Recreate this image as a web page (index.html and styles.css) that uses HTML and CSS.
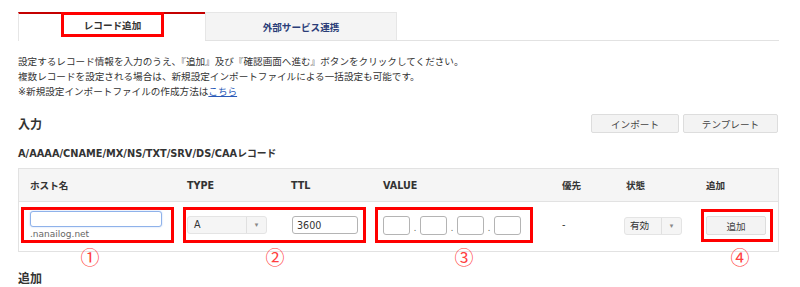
FILE: index.html
```html
<!DOCTYPE html>
<html>
  <head>
    <title>DNSレコード設定</title>
    <link rel="stylesheet" href="styles.css">
  </head>
  <body>
    <div class="page">
      <div class="tabs">
        <div class="tab tab-active"><span class="mark mark-tab">レコード追加</span></div>
        <div class="tab tab-other">外部サービス連携</div>
      </div>

      <p class="intro">
        設定するレコード情報を入力のうえ、『追加』及び『確認画面へ進む』ボタンをクリックしてください。<br>
        複数レコードを設定される場合は、新規設定インポートファイルによる一括設定も可能です。<br>
        ※新規設定インポートファイルの作成方法は<a href="#">こちら</a>
      </p>

      <div class="section-head">
        <h3>入力</h3>
        <div class="tools">
          <button class="btn btn-import">インポート</button>
          <button class="btn btn-template">テンプレート</button>
        </div>
      </div>

      <h4 class="record-title">A/AAAA/CNAME/MX/NS/TXT/SRV/DS/CAAレコード</h4>

      <div class="record-table">
        <div class="thead">
          <div class="th col-host">ホスト名</div>
          <div class="th col-type">TYPE</div>
          <div class="th col-ttl">TTL</div>
          <div class="th col-value">VALUE</div>
          <div class="th col-prio">優先</div>
          <div class="th col-state">状態</div>
          <div class="th col-add">追加</div>
        </div>
        <div class="trow">
          <div class="mark mark-host">
            <input type="text" class="host-input">
            <span class="domain">.nanailog.net</span>
          </div>
          <div class="mark mark-type">
            <div class="select select-type"><span class="select-val">A</span><span class="select-arrow">▾</span></div>
            <input type="text" class="ttl-input" value="3600">
          </div>
          <div class="mark mark-value">
            <input type="text" class="ip-input">
            <span class="dot">.</span>
            <input type="text" class="ip-input">
            <span class="dot">.</span>
            <input type="text" class="ip-input">
            <span class="dot">.</span>
            <input type="text" class="ip-input">
          </div>
          <div class="prio">-</div>
          <div class="select select-state"><span class="select-val">有効</span><span class="select-arrow">▾</span></div>
          <div class="mark mark-add">
            <button class="btn btn-add">追加</button>
          </div>
        </div>
      </div>

      <div class="notes">
        <span class="num num-1">①</span>
        <span class="num num-2">②</span>
        <span class="num num-3">③</span>
        <span class="num num-4">④</span>
      </div>

      <h3 class="add-title">追加</h3>
    </div>
  </body>
</html>
```

FILE: styles.css
```css
/* DNS record form */
body {
  margin: 0;
  font-family: "DejaVu Sans", "Noto Sans CJK JP", sans-serif;
  font-size: 9.6px;
  color: #333333;
  background-color: #ffffff;
}

.page {
  width: 761px;
  padding: 12px 18px 0 18px;
}

/* tabs */
.tabs {
  display: flex;
  border-bottom: 1px solid #e2e2e2;
  height: 28px;
}

.tab {
  box-sizing: border-box;
  height: 28px;
  font-weight: bold;
}

.tab-active {
  width: 187px;
  height: 29px;
  margin-bottom: -1px;
  border-top: 2px solid #c40000;
  border-left: 1px solid #e6e6e6;
  background-color: #ffffff;
  display: flex;
  justify-content: center;
  align-items: flex-start;
}

.tab-other {
  width: 192px;
  border: 1px solid #e6e6e6;
  border-bottom: none;
  background-color: #f4f4f4;
  color: #2a3d78;
  display: flex;
  justify-content: center;
  align-items: center;
  padding-top: 1px;
}

/* red annotation frames */
.mark {
  box-sizing: border-box;
  border: 3px solid #ff0000;
}

.mark-tab {
  width: 103px;
  height: 25px;
  margin-top: -2px;
  margin-left: 1px;
  display: flex;
  justify-content: center;
  align-items: center;
}

.intro {
  margin: 13px 0 0 0;
  line-height: 15px;
}

.intro a {
  color: #2a5ab8;
}

.section-head {
  display: flex;
  justify-content: space-between;
  align-items: center;
  margin-top: 15px;
  height: 19px;
}

h3 {
  margin: 0;
  font-size: 12px;
  font-weight: bold;
}

.tools {
  display: flex;
  gap: 4px;
  margin-right: 1px;
}

.btn {
  box-sizing: border-box;
  height: 19px;
  border: 1px solid #dddddd;
  border-radius: 2px;
  background-color: #f3f3f3;
  color: #444444;
  font-family: inherit;
  font-size: 9.6px;
  padding: 0;
}

.btn-import {
  width: 88px;
}

.btn-template {
  width: 95px;
}

.record-title {
  margin: 14px 0 0 0;
  font-size: 9.8px;
  line-height: 14px;
}

/* table */
.record-table {
  margin-top: 7px;
  border: 1px solid #e2e2e2;
}

.thead {
  display: flex;
  height: 32px;
  align-items: center;
  background-color: #f5f5f5;
  border-bottom: 1px solid #e2e2e2;
}

.th {
  box-sizing: border-box;
  padding-left: 11px;
  font-weight: bold;
}

.col-host { width: 157px; }
.col-type { width: 104px; }
.col-ttl { width: 92px; }
.col-value { width: 179px; }
.col-prio { width: 64px; }
.col-state { width: 80px; }
.col-add { width: 83px; }

.trow {
  display: flex;
  align-items: flex-start;
  height: 49px;
  padding-top: 5px;
  box-sizing: border-box;
}

input {
  box-sizing: border-box;
  height: 18px;
  border: 1px solid #b4b4b4;
  border-radius: 3px;
  font-family: inherit;
  font-size: 9.6px;
  color: #333333;
  margin: 0;
}

.mark-host {
  width: 153px;
  height: 36px;
  margin-left: 2px;
  padding: 1px 0 0 6px;
  display: flex;
  flex-direction: column;
}

.host-input {
  width: 132px;
  height: 17px;
  border-color: #8fb2ea;
  box-shadow: 0 0 2px #b9d0f5;
}

.domain {
  font-size: 9px;
  color: #666666;
  line-height: 12px;
  margin-top: 1px;
}

.mark-type {
  width: 183px;
  height: 36px;
  margin-left: 9px;
  padding-left: 1px;
  display: flex;
  align-items: center;
}

.select {
  box-sizing: border-box;
  height: 18px;
  display: flex;
  border: 1px solid #e4e4e4;
  border-radius: 3px;
  background-color: #f5f5f5;
}

.select-val {
  flex: 1;
  padding-left: 6px;
  line-height: 16px;
}

.select-arrow {
  width: 19px;
  border-left: 1px solid #e0e0e0;
  text-align: center;
  font-size: 7px;
  color: #888888;
  line-height: 16px;
}

.select-type {
  width: 80px;
}

.ttl-input {
  width: 66px;
  margin-left: 25px;
  padding-left: 4px;
}

.mark-value {
  width: 158px;
  height: 36px;
  margin-left: 9px;
  padding-left: 5px;
  display: flex;
  align-items: center;
}

.ip-input {
  width: 27px;
  height: 19px;
}

.dot {
  width: 10px;
  text-align: center;
  font-size: 8px;
  color: #555555;
  padding-top: 6px;
}

.prio {
  margin-left: 29px;
  width: 62px;
  line-height: 36px;
}

.select-state {
  width: 58px;
  margin-top: 10px;
}

.select-state .select-val {
  padding-left: 5px;
}

.mark-add {
  width: 72px;
  height: 33px;
  margin-left: 19px;
  margin-top: 2px;
  display: flex;
  align-items: center;
  padding-left: 2px;
}

.btn-add {
  width: 60px;
}

/* circled numbers */
.notes {
  display: flex;
  margin-top: -4px;
  height: 18px;
  line-height: 18px;
}

.num {
  width: 20px;
  text-align: center;
  font-family: "Noto Sans CJK JP", sans-serif;
  font-size: 19px;
  color: #ff4040;
}

.num-1 { margin-left: 62px; }
.num-2 { margin-left: 165px; }
.num-3 { margin-left: 169px; }
.num-4 { margin-left: 256px; }

.add-title {
  margin-top: 3px;
}
```
